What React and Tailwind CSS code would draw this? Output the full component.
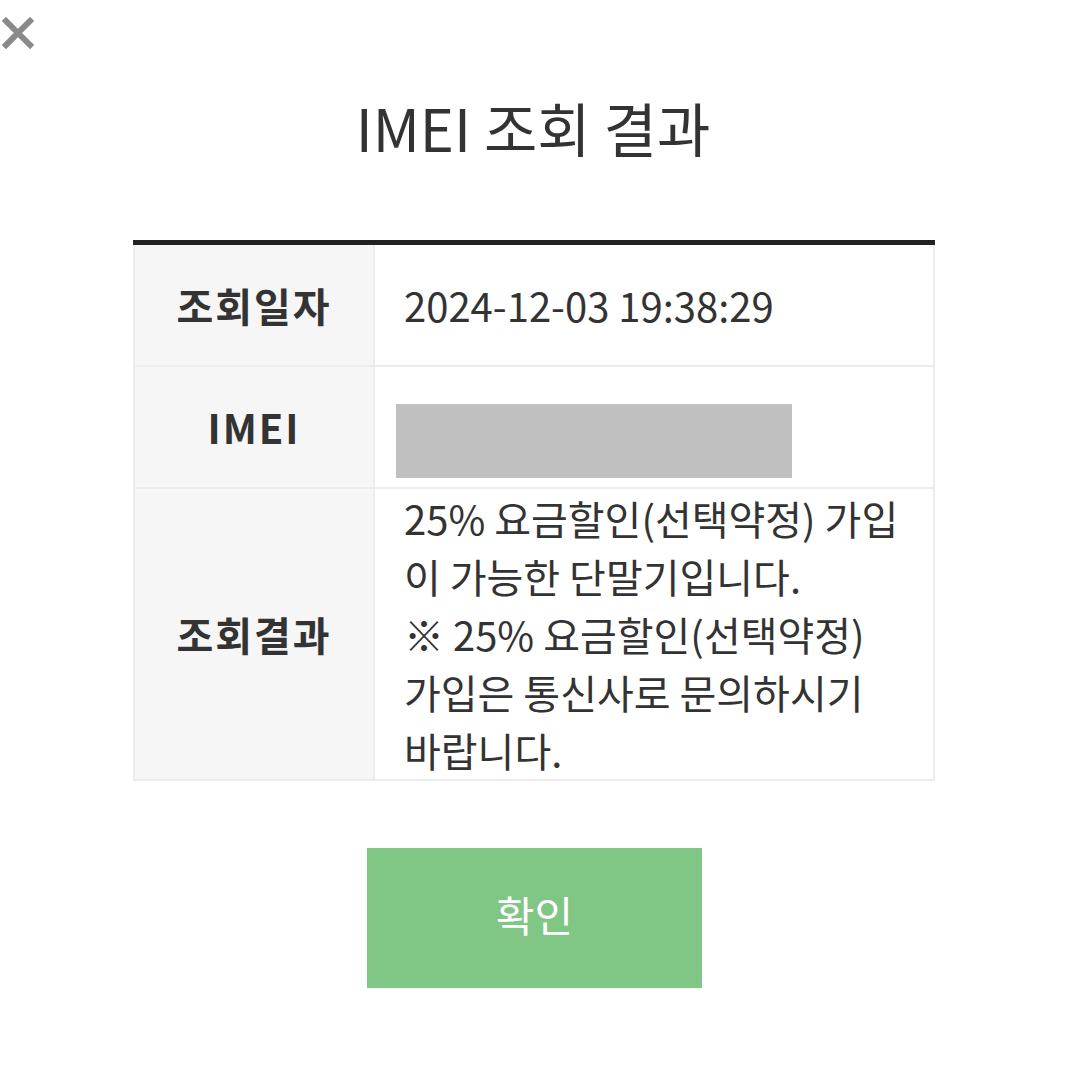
import React from 'react';

const rows = [
  { label: '조회일자', kind: 'text', value: '2024-12-03 19:38:29', h: 'h-[122px]' },
  { label: 'IMEI', kind: 'mask', h: 'h-[122px]' },
  {
    label: '조회결과',
    kind: 'lines',
    lines: [
      '25% 요금할인(선택약정) 가입',
      '이 가능한 단말기입니다.',
      '※ 25% 요금할인(선택약정)',
      '가입은 통신사로 문의하시기',
      '바랍니다.',
    ],
    h: 'h-[292px]',
  },
];

const App = () => {
  return (
    <div className="relative w-[1066px] h-[1066px] bg-white text-[#333] font-['Noto_Sans_CJK_KR','Noto_Sans',sans-serif]">
      {/* Close */}
      <button className="absolute left-[2px] top-[17px] w-[32px] h-[32px]" aria-label="close">
        <svg viewBox="0 0 32 32" className="w-[32px] h-[32px]">
          <path d="M4 4 L28 28 M28 4 L4 28" stroke="#8a8a8a" strokeWidth="6" strokeLinecap="square" fill="none" />
        </svg>
      </button>

      {/* Title */}
      <h1 className="pt-[92px] text-center text-[58px] leading-[70px] font-normal">IMEI 조회 결과</h1>

      {/* Result table */}
      <div className="mt-[78px] ml-[133px] w-[802px] border-t-[5px] border-[#222]">
        {rows.map((row) => (
          <div key={row.label} className={`flex ${row.h} border-b-2 border-x-2 border-[#ececec]`}>
            <div className="w-[240px] shrink-0 flex items-center justify-center bg-[#f6f6f6] border-r-2 border-[#ececec] text-[40px] font-bold tracking-[2px]">
              {row.label}
            </div>
            {row.kind === 'text' && (
              <div className="flex-1 flex items-center pl-[29px] text-[40px]">{row.value}</div>
            )}
            {row.kind === 'mask' && (
              <div className="flex-1 pl-[21px] pt-[37px]">
                <div className="w-[396px] h-[74px] bg-[#c0c0c0]" />
              </div>
            )}
            {row.kind === 'lines' && (
              <div className="flex-1 pl-[29px] text-[40px] leading-[58px]">
                {row.lines.map((l) => (
                  <div key={l}>{l}</div>
                ))}
              </div>
            )}
          </div>
        ))}
      </div>

      {/* Confirm */}
      <button className="mt-[67px] ml-[367px] w-[335px] h-[140px] pb-[10px] bg-[#80c684] text-white text-[42px] flex items-center justify-center">
        확인
      </button>
    </div>
  );
};

export default App;
